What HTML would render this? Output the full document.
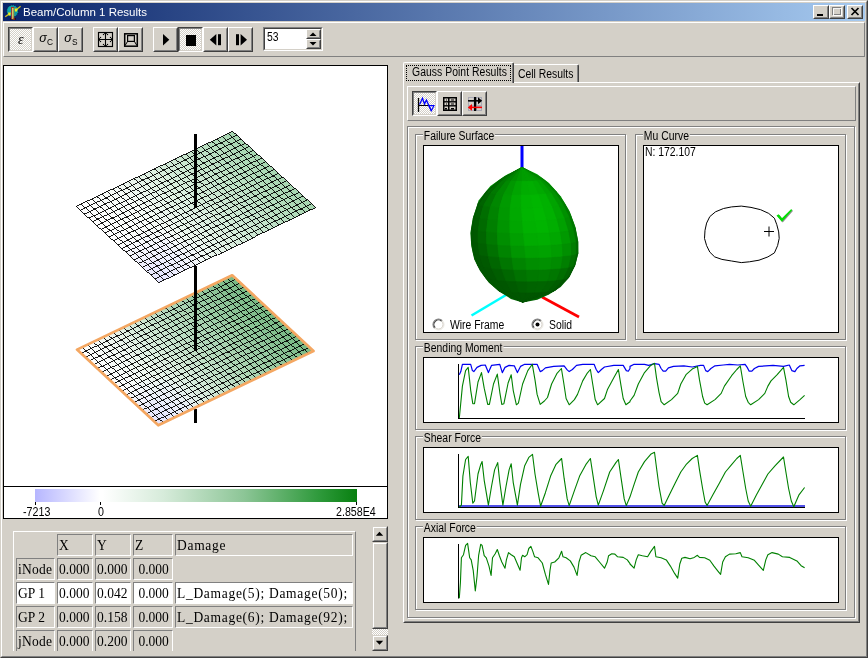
<!DOCTYPE html><html><head><meta charset="utf-8"><title>Beam/Column 1 Results</title><style>
html,body{margin:0;padding:0;}
body{width:868px;height:658px;background:#D4D0C8;overflow:hidden;position:relative;will-change:transform;
 font-family:"Liberation Sans",sans-serif;font-size:11px;color:#000;}
div{position:absolute;box-sizing:border-box;}
svg{position:absolute;left:0;top:0;overflow:visible;}
.t{white-space:nowrap;line-height:1;}
.raised{border:1px solid;border-color:#fff #808080 #808080 #fff;}
.btn{border:1px solid;border-color:#fff #404040 #404040 #fff;background:#D4D0C8;}
.btn:after{content:"";position:absolute;left:0;top:0;right:0;bottom:0;border:1px solid;border-color:#D4D0C8 #808080 #808080 #D4D0C8;}
.sbtn{border:1px solid;border-color:#D4D0C8 #404040 #404040 #D4D0C8;background:#D4D0C8;}
.sbtn:after{content:"";position:absolute;left:0;top:0;right:0;bottom:0;border:1px solid;border-color:#fff #808080 #808080 #fff;}
.btnp{border:1px solid;border-color:#404040 #fff #fff #404040;background-color:#D4D0C8;
 background-image:linear-gradient(45deg,#fff 25%,transparent 25%,transparent 75%,#fff 75%),linear-gradient(45deg,#fff 25%,transparent 25%,transparent 75%,#fff 75%);
 background-size:2px 2px;background-position:0 0,1px 1px;}
.btnp:after{content:"";position:absolute;left:0;top:0;right:0;bottom:0;border:1px solid;border-color:#808080 #D4D0C8 #D4D0C8 #808080;}
.etch{border:1px solid #808080;box-shadow:1px 1px 0 #fff, inset 1px 1px 0 #fff;}
.view{background:#fff;border:1px solid #000;overflow:hidden;}
.gl{background:#D4D0C8;padding:0 1px;white-space:nowrap;line-height:13px;height:13px;}
.cell{border:1px solid;border-color:#808080 #fff #fff #808080;font-family:"Liberation Serif",serif;font-size:15px;white-space:nowrap;line-height:21px;padding-left:1px;overflow:hidden;}
.w{background:#fff;}
.cs{display:inline-block;transform:scaleX(0.9);transform-origin:0 0;}
.ux{transform:scaleX(0.866);transform-origin:0 0;}
.sx{transform:scaleX(0.89);transform-origin:0 0;}
</style></head><body>
<div style="left:0px;top:0px;width:868px;height:658px;border:1px solid;border-color:#D4D0C8 #404040 #404040 #D4D0C8;"></div>
<div style="left:1px;top:1px;width:866px;height:656px;border:1px solid;border-color:#fff #808080 #808080 #fff;"></div>
<div style="left:3px;top:3px;width:862px;height:18px;background:linear-gradient(90deg,#0A246A 0%,#A6CAF0 100%);"></div>
<svg width="868" height="658" viewBox="0 0 868 658" style="pointer-events:none">
<g id="ticon">
<circle cx="12.5" cy="11" r="5.9" fill="#0c98a0" stroke="#081040" stroke-width="0.9" stroke-dasharray="1 1.2"/>
<circle cx="11" cy="9.5" r="3" fill="#18b0b0" opacity="0.7"/>
<path d="M5.2 16.8 L9.8 13.6" stroke="#d0c020" stroke-width="1.3" fill="none"/>
<path d="M8 12.6 L10.8 12.4 L10.4 15.2 L8.8 15.6 Z" fill="#f4f41c"/>
<rect x="10.2" y="18.3" width="5.8" height="1.3" fill="#180808"/>
<rect x="11" y="7.4" width="1.3" height="11.8" fill="#963838"/>
<rect x="12.2" y="7.4" width="1.1" height="11.8" fill="#ecdc70"/>
<rect x="13.2" y="7.4" width="1" height="11.8" fill="#b89838"/>
<rect x="11" y="7" width="3.2" height="0.9" fill="#b02818"/>
<rect x="13" y="18.6" width="2.2" height="1" fill="#b02010"/>
<path d="M20.6 6.2 L16 10" stroke="#d0c020" stroke-width="1.3" fill="none"/>
<path d="M14.8 8.6 L17.6 8.8 L17 11.4 L15 11.4 Z" fill="#f4f41c"/>
</g>
</svg>
<div class="t" style="left:23px;top:5px;width:300px;height:14px;color:#fff;font-size:11.5px;line-height:14px;">Beam/Column 1 Results</div>
<div class="btn" style="left:813px;top:5px;width:16px;height:14px;"><svg width="14" height="12"><rect x="3" y="8" width="6" height="2" fill="#000"/></svg></div>
<div class="btn" style="left:829px;top:5px;width:16px;height:14px;"><svg width="14" height="12"><rect x="2.5" y="1.5" width="8" height="7" fill="none" stroke="#808080"/><rect x="2" y="1" width="9" height="2" fill="#808080"/><rect x="3.5" y="2.5" width="8" height="7" fill="none" stroke="#fff" opacity="0.9"/></svg></div>
<div class="btn" style="left:847px;top:5px;width:16px;height:14px;"><svg width="14" height="12"><path d="M3.5 2 L10.5 9 M10.5 2 L3.5 9" stroke="#000" stroke-width="1.7" fill="none"/></svg></div>
<div class="raised" style="left:3px;top:22px;width:862px;height:35px;"></div>
<div class="btnp" style="left:8px;top:27px;width:25px;height:25px;"><div class="t" style="left:9px;top:5px;font-style:italic;font-size:14px;font-family:'Liberation Serif',serif;">&epsilon;</div></div>
<div class="btn" style="left:33px;top:27px;width:25px;height:25px;"><div class="t" style="left:5.3px;top:4.3px;font-size:12.5px;font-style:italic;">&sigma;</div><div class="t ux" style="left:12.8px;top:9.4px;font-size:9.6px;">C</div></div>
<div class="btn" style="left:58px;top:27px;width:25px;height:25px;"><div class="t" style="left:5.3px;top:4.3px;font-size:12.5px;font-style:italic;">&sigma;</div><div class="t ux" style="left:12.8px;top:9.4px;font-size:9.6px;">S</div></div>
<div class="btn" style="left:93px;top:27px;width:25px;height:25px;"><svg width="23" height="23" viewBox="0 0 23 23">
<rect x="4.5" y="4.5" width="14" height="14" fill="none" stroke="#000" stroke-width="1.15"/>
<path d="M11.5 5 V18 M5 11.5 H18" stroke="#000" stroke-width="1.1"/>
<g fill="#000"><rect x="10" y="5" width="3" height="0.8"/><rect x="10" y="17.2" width="3" height="0.8"/><rect x="5" y="10" width="0.8" height="3"/><rect x="17.2" y="10" width="0.8" height="3"/>
<rect x="8.9" y="5.9" width="1.2" height="1.2"/><rect x="12.9" y="5.9" width="1.2" height="1.2"/><rect x="5.9" y="8.9" width="1.2" height="1.2"/><rect x="15.9" y="8.9" width="1.2" height="1.2"/>
<rect x="5.9" y="12.9" width="1.2" height="1.2"/><rect x="15.9" y="12.9" width="1.2" height="1.2"/><rect x="8.9" y="15.9" width="1.2" height="1.2"/><rect x="12.9" y="15.9" width="1.2" height="1.2"/></g>
</svg></div>
<div class="btn" style="left:118px;top:27px;width:25px;height:25px;"><svg width="23" height="23" viewBox="0 0 23 23">
<rect x="5.7" y="5.8" width="12.6" height="12.4" fill="none" stroke="#000" stroke-width="1.5"/>
<rect x="8.6" y="7.6" width="6.8" height="5.8" fill="none" stroke="#000" stroke-width="1.2"/>
<path d="M8.6 13.4 L6.2 17.3 M15.4 13.4 L17.8 17.3" stroke="#000" stroke-width="1"/>
</svg></div>
<div class="btn" style="left:153px;top:27px;width:25px;height:25px;"><svg width="23" height="23"><path d="M9 6 L9 17.4 L15.3 11.7 Z" fill="#000"/></svg></div>
<div class="btnp" style="left:178px;top:27px;width:25px;height:25px;"><svg width="23" height="23"><rect x="7" y="7" width="10" height="11" fill="#000"/></svg></div>
<div class="btn" style="left:203px;top:27px;width:25px;height:25px;"><svg width="23" height="23"><path d="M12.3 6 L12.3 17.4 L5.8 11.7 Z" fill="#000"/><rect x="14" y="6.2" width="3" height="11" fill="#000"/></svg></div>
<div class="btn" style="left:228px;top:27px;width:25px;height:25px;"><svg width="23" height="23"><rect x="7" y="6.2" width="3" height="11" fill="#000"/><path d="M11.6 6 L11.6 17.4 L18 11.7 Z" fill="#000"/></svg></div>
<div style="left:263px;top:27px;width:60px;height:24px;background:#fff;border:1px solid;border-color:#808080 #fff #fff #808080;"></div>
<div style="left:264px;top:28px;width:58px;height:22px;border:1px solid;border-color:#404040 #D4D0C8 #D4D0C8 #404040;"></div>
<div class="t ux" style="left:267px;top:31px;width:30px;height:12px;font-size:12px;">53</div>
<div class="btn" style="left:306px;top:29px;width:15px;height:10px;"><svg width="13" height="8"><path d="M2.5 6 L9.5 6 L6 2.5 Z" fill="#000"/></svg></div>
<div class="btn" style="left:306px;top:39px;width:15px;height:10px;"><svg width="13" height="8"><path d="M2.5 2 L9.5 2 L6 5.5 Z" fill="#000"/></svg></div>
<div class="view" style="left:3px;top:65px;width:385px;height:454px;"></div>
<svg width="868" height="658" viewBox="0 0 868 658">
<rect x="194" y="409" width="3" height="14" fill="#000"/>
<defs><linearGradient id="g2" gradientUnits="userSpaceOnUse" x1="117.7" y1="387.5" x2="226.8" y2="270.3">
<stop offset="0" stop-color="#ffffff"/>
<stop offset="0.2" stop-color="#eef7f0"/>
<stop offset="0.55" stop-color="#b6dabd"/>
<stop offset="1" stop-color="#76b883"/>
</linearGradient>
<radialGradient id="g2r" gradientUnits="userSpaceOnUse" cx="158.3" cy="425.3" r="50"><stop offset="0" stop-color="#e2e2ff"/><stop offset="1" stop-color="#e2e2ff" stop-opacity="0"/></radialGradient>
<clipPath id="g2c"><polygon points="77.0,349.6 232.2,275.3 313.5,351.0 158.3,425.3"/></clipPath></defs>
<polygon points="77.0,349.6 232.2,275.3 313.5,351.0 158.3,425.3" fill="url(#g2)"/>
<polygon points="77.0,349.6 232.2,275.3 313.5,351.0 158.3,425.3" fill="url(#g2r)"/>
<path d="M77.0 349.6L158.3 425.3M82.2 347.1L163.5 422.8M87.3 344.6L168.6 420.3M92.5 342.2L173.8 417.9M97.7 339.7L179.0 415.4M102.9 337.2L184.2 412.9M108.0 334.7L189.3 410.4M113.2 332.3L194.5 408.0M118.4 329.8L199.7 405.5M123.6 327.3L204.9 403.0M128.7 324.8L210.0 400.5M133.9 322.4L215.2 398.1M139.1 319.9L220.4 395.6M144.3 317.4L225.6 393.1M149.4 314.9L230.7 390.6M154.6 312.5L235.9 388.2M159.8 310.0L241.1 385.7M164.9 307.5L246.2 383.2M170.1 305.0L251.4 380.7M175.3 302.5L256.6 378.2M180.5 300.1L261.8 375.8M185.6 297.6L266.9 373.3M190.8 295.1L272.1 370.8M196.0 292.6L277.3 368.3M201.2 290.2L282.5 365.9M206.3 287.7L287.6 363.4M211.5 285.2L292.8 360.9M216.7 282.7L298.0 358.4M221.9 280.3L303.2 356.0M227.0 277.8L308.3 353.5M232.2 275.3L313.5 351.0M77.0 349.6L232.2 275.3M81.1 353.4L236.3 279.1M85.1 357.2L240.3 282.9M89.2 361.0L244.4 286.7M93.3 364.7L248.5 290.4M97.3 368.5L252.5 294.2M101.4 372.3L256.6 298.0M105.5 376.1L260.7 301.8M109.5 379.9L264.7 305.6M113.6 383.7L268.8 309.4M117.7 387.5L272.9 313.2M121.7 391.2L276.9 316.9M125.8 395.0L281.0 320.7M129.8 398.8L285.0 324.5M133.9 402.6L289.1 328.3M138.0 406.4L293.2 332.1M142.0 410.2L297.2 335.9M146.1 413.9L301.3 339.6M150.2 417.7L305.4 343.4M154.2 421.5L309.4 347.2M158.3 425.3L313.5 351.0" stroke="#000" stroke-width="0.9" fill="none" shape-rendering="crispEdges"/>
<polygon points="77.0,349.6 232.2,275.3 313.5,351.0 158.3,425.3" fill="none" stroke="#F4A762" stroke-width="2.7" stroke-linejoin="round"/>
<rect x="194" y="266" width="3" height="85" fill="#000"/>
<defs><linearGradient id="g1" gradientUnits="userSpaceOnUse" x1="117.5" y1="244.6" x2="226.5" y2="125.7">
<stop offset="0" stop-color="#ffffff"/>
<stop offset="0.25" stop-color="#f6fbf7"/>
<stop offset="0.6" stop-color="#cfe9d5"/>
<stop offset="1" stop-color="#a6d6b0"/>
</linearGradient>
<radialGradient id="g1r" gradientUnits="userSpaceOnUse" cx="159.0" cy="282.6" r="55"><stop offset="0" stop-color="#e4e4ff"/><stop offset="1" stop-color="#e4e4ff" stop-opacity="0"/></radialGradient>
<clipPath id="g1c"><polygon points="76.0,206.5 232.7,131.4 315.7,207.5 159.0,282.6"/></clipPath></defs>
<polygon points="76.0,206.5 232.7,131.4 315.7,207.5 159.0,282.6" fill="url(#g1)"/>
<polygon points="76.0,206.5 232.7,131.4 315.7,207.5 159.0,282.6" fill="url(#g1r)"/>
<path d="M76.0 206.5L159.0 282.6M81.2 204.0L164.2 280.1M86.4 201.5L169.4 277.6M91.7 199.0L174.7 275.1M96.9 196.5L179.9 272.6M102.1 194.0L185.1 270.1M107.3 191.5L190.3 267.6M112.6 189.0L195.6 265.1M117.8 186.5L200.8 262.6M123.0 184.0L206.0 260.1M128.2 181.5L211.2 257.6M133.5 179.0L216.5 255.1M138.7 176.5L221.7 252.6M143.9 174.0L226.9 250.1M149.1 171.5L232.1 247.6M154.3 168.9L237.3 245.1M159.6 166.4L242.6 242.5M164.8 163.9L247.8 240.0M170.0 161.4L253.0 237.5M175.2 158.9L258.2 235.0M180.5 156.4L263.5 232.5M185.7 153.9L268.7 230.0M190.9 151.4L273.9 227.5M196.1 148.9L279.1 225.0M201.4 146.4L284.4 222.5M206.6 143.9L289.6 220.0M211.8 141.4L294.8 217.5M217.0 138.9L300.0 215.0M222.3 136.4L305.3 212.5M227.5 133.9L310.5 210.0M232.7 131.4L315.7 207.5M76.0 206.5L232.7 131.4M80.2 210.3L236.8 135.2M84.3 214.1L241.0 139.0M88.5 217.9L245.1 142.8M92.6 221.7L249.3 146.6M96.8 225.5L253.4 150.4M100.9 229.3L257.6 154.2M105.1 233.1L261.8 158.0M109.2 236.9L265.9 161.8M113.3 240.7L270.0 165.6M117.5 244.6L274.2 169.5M121.7 248.4L278.4 173.3M125.8 252.2L282.5 177.1M129.9 256.0L286.6 180.9M134.1 259.8L290.8 184.7M138.2 263.6L294.9 188.5M142.4 267.4L299.1 192.3M146.6 271.2L303.2 196.1M150.7 275.0L307.4 199.9M154.9 278.8L311.6 203.7M159.0 282.6L315.7 207.5" stroke="#000" stroke-width="0.9" fill="none" shape-rendering="crispEdges"/>
<rect x="194" y="134" width="3" height="74" fill="#000"/>
</svg>
<div style="left:4px;top:486px;width:383px;height:1px;background:#000;"></div>
<div style="left:35px;top:489px;width:322px;height:13px;background:linear-gradient(90deg,#b6b6ff 0%,#ffffff 20.2%,#ffffff 21%,#d6ebda 40%,#8cc596 65%,#2f9a3c 88%,#088010 100%);"></div>
<div style="left:35px;top:502px;width:1px;height:3px;background:#000;"></div>
<div style="left:100px;top:502px;width:1px;height:3px;background:#000;"></div>
<div style="left:356px;top:502px;width:1px;height:3px;background:#000;"></div>
<div class="t sx" style="left:23px;top:506px;font-size:12px;">-7213</div>
<div class="t sx" style="left:98px;top:506px;font-size:12px;">0</div>
<div class="t sx" style="left:336px;top:506px;font-size:12px;">2.858E4</div>
<div style="left:13px;top:531px;width:343px;height:120px;border:1px solid;border-color:#fff #808080 #808080 #fff;border-bottom:none;"></div>
<div style="left:13px;top:531px;width:345px;height:120px;overflow:hidden;">
<div class="cell" style="left:44px;top:3px;width:36px;height:22px;"><span class="cs" style="">X</span></div>
<div class="cell" style="left:82px;top:3px;width:36px;height:22px;"><span class="cs" style="">Y</span></div>
<div class="cell" style="left:120px;top:3px;width:40px;height:22px;"><span class="cs" style="">Z</span></div>
<div class="cell" style="left:162px;top:3px;width:178px;height:22px;"><span class="cs" style="letter-spacing:0.78px;">Damage</span></div>
<div class="cell" style="left:3px;top:27px;width:39px;height:22px;"><span class="cs" style="letter-spacing:0.3px;">iNode</span></div>
<div class="cell" style="left:44px;top:27px;width:36px;height:22px;"><span class="cs" style="">0.000</span></div>
<div class="cell" style="left:82px;top:27px;width:36px;height:22px;"><span class="cs" style="">0.000</span></div>
<div class="cell" style="left:120px;top:27px;width:40px;height:22px;text-align:right;padding-right:3px;"><span class="cs" style="transform-origin:100% 0;">0.000</span></div>
<div class="cell w" style="left:3px;top:51px;width:39px;height:22px;"><span class="cs" style="">GP 1</span></div>
<div class="cell w" style="left:44px;top:51px;width:36px;height:22px;"><span class="cs" style="">0.000</span></div>
<div class="cell w" style="left:82px;top:51px;width:36px;height:22px;"><span class="cs" style="">0.042</span></div>
<div class="cell w" style="left:120px;top:51px;width:40px;height:22px;text-align:right;padding-right:3px;"><span class="cs" style="transform-origin:100% 0;">0.000</span></div>
<div class="cell w" style="left:162px;top:51px;width:178px;height:22px;"><span class="cs" style="letter-spacing:0.78px;">L_Damage(5); Damage(50);</span></div>
<div class="cell" style="left:3px;top:75px;width:39px;height:22px;"><span class="cs" style="">GP 2</span></div>
<div class="cell" style="left:44px;top:75px;width:36px;height:22px;"><span class="cs" style="">0.000</span></div>
<div class="cell" style="left:82px;top:75px;width:36px;height:22px;"><span class="cs" style="">0.158</span></div>
<div class="cell" style="left:120px;top:75px;width:40px;height:22px;text-align:right;padding-right:3px;"><span class="cs" style="transform-origin:100% 0;">0.000</span></div>
<div class="cell" style="left:162px;top:75px;width:178px;height:22px;"><span class="cs" style="letter-spacing:0.78px;">L_Damage(6); Damage(92);</span></div>
<div class="cell" style="left:3px;top:99px;width:39px;height:22px;"><span class="cs" style="letter-spacing:0.3px;">jNode</span></div>
<div class="cell" style="left:44px;top:99px;width:36px;height:22px;"><span class="cs" style="">0.000</span></div>
<div class="cell" style="left:82px;top:99px;width:36px;height:22px;"><span class="cs" style="">0.200</span></div>
<div class="cell" style="left:120px;top:99px;width:40px;height:22px;text-align:right;padding-right:3px;"><span class="cs" style="transform-origin:100% 0;">0.000</span></div>
</div>
<div style="left:372px;top:526px;width:16px;height:125px;background-color:#D4D0C8;background-image:linear-gradient(45deg,#fff 25%,transparent 25%,transparent 75%,#fff 75%),linear-gradient(45deg,#fff 25%,transparent 25%,transparent 75%,#fff 75%);background-size:2px 2px;background-position:0 0,1px 1px;"></div>
<div class="sbtn" style="left:372px;top:526px;width:16px;height:16px;"><svg width="14" height="14"><path d="M2.8 8.7 L10.2 8.7 L6.5 4.7 Z" fill="#000"/></svg></div>
<div class="sbtn" style="left:372px;top:542px;width:16px;height:87px;"></div>
<div class="sbtn" style="left:372px;top:635px;width:16px;height:16px;"><svg width="14" height="14"><path d="M2.8 4.8 L10.2 4.8 L6.5 8.8 Z" fill="#000"/></svg></div>
<div style="left:403px;top:82px;width:457px;height:541px;border:1px solid;border-color:#fff #404040 #404040 #fff;"></div>
<div style="left:404px;top:83px;width:455px;height:539px;border:1px solid;border-color:#D4D0C8 #808080 #808080 #D4D0C8;"></div>
<div style="left:514px;top:64px;width:65px;height:18px;border:1px solid;border-color:#fff #404040 transparent #D4D0C8;border-bottom:none;border-left:none;border-radius:0 2px 0 0;"></div>
<div style="left:515px;top:65px;width:63px;height:17px;border-right:1px solid #808080;"></div>
<div class="t ux" style="left:518px;top:68px;font-size:12px;">Cell Results</div>
<div style="left:403px;top:62px;width:111px;height:21px;background:#D4D0C8;border:1px solid;border-color:#fff #404040 #D4D0C8 #fff;border-bottom:none;border-radius:2px 2px 0 0;"></div>
<div style="left:404px;top:63px;width:109px;height:20px;border-right:1px solid #808080;"></div>
<div style="left:406px;top:65px;width:105px;height:16px;border:1px dotted #000;"></div>
<div class="t ux" style="left:411.6px;top:66px;font-size:12px;letter-spacing:0.05px;">Gauss Point Results</div>
<div class="raised" style="left:407px;top:86px;width:449px;height:35px;"></div>
<div class="btnp" style="left:412px;top:91px;width:25px;height:25px;"><svg width="23" height="23" viewBox="0 0 23 23">
<path d="M5.5 6 V20" stroke="#000" stroke-width="1.3"/><path d="M5.5 13.5 H20.5" stroke="#000" stroke-width="1"/>
<path d="M6.6 12.5 L9.5 6.2 L11.5 12 L13.4 8.1 L18.2 18.7" stroke="#0000FF" stroke-width="1.3" fill="none"/>
<path d="M15.8 13.6 L21 13.6 L18.4 18.7 Z" stroke="#0000FF" stroke-width="1.1" fill="none"/></svg></div>
<div class="btn" style="left:437px;top:91px;width:25px;height:25px;"><svg width="23" height="23" viewBox="0 0 23 23">
<rect x="5" y="5" width="14" height="14" fill="#000"/>
<g fill="#D4D0C8"><rect x="6.5" y="6.5" width="3.5" height="2.6"/><rect x="11.5" y="6.5" width="6" height="2.6"/>
<rect x="6.5" y="10.5" width="3.5" height="2.6"/><rect x="11.5" y="10.5" width="6" height="2.6"/>
<rect x="6.5" y="14.5" width="3.5" height="3"/><rect x="11.5" y="14.5" width="6" height="3"/></g>
<g fill="#000"><rect x="8" y="7.5" width="1" height="1"/><rect x="13" y="7.5" width="3" height="1"/><rect x="8" y="11.5" width="1" height="1"/><rect x="13" y="11.5" width="3" height="1"/><rect x="7" y="16" width="2" height="1.5"/><rect x="13" y="16" width="3" height="1.5"/></g></svg></div>
<div class="btn" style="left:462px;top:91px;width:25px;height:25px;"><svg width="23" height="23" viewBox="0 0 23 23">
<rect x="5" y="5" width="14" height="14" fill="#a8a8b4"/>
<g fill="#D4D0C8"><rect x="6" y="6" width="4.5" height="2.5"/><rect x="14" y="6" width="4" height="2.5"/><rect x="6" y="10" width="4.5" height="3"/><rect x="14" y="10" width="4" height="3"/><rect x="6" y="15.5" width="4.5" height="2.5"/><rect x="14" y="15.5" width="4" height="2.5"/></g>
<rect x="11" y="5" width="2.2" height="14" fill="#000"/>
<path d="M5 8.8 H16" stroke="#000" stroke-width="1.5"/><path d="M15 5.3 L19.2 8.8 L15 12.3 Z" fill="#000"/>
<path d="M8 15.4 H19" stroke="#FF0000" stroke-width="1.5"/><path d="M9 12 L4.8 15.4 L9 18.8 Z" fill="#FF0000"/></svg></div>
<div class="etch" style="left:407px;top:126px;width:448px;height:492px;"></div>
<div class="etch" style="left:415px;top:134px;width:211px;height:206px;"></div><div class="gl ux" style="left:423px;top:130px;font-size:12px;">Failure Surface</div>
<div class="etch" style="left:635px;top:134px;width:211px;height:206px;"></div><div class="gl ux" style="left:643px;top:130px;font-size:12px;">Mu Curve</div>
<div class="etch" style="left:415px;top:346px;width:431px;height:84px;"></div><div class="gl ux" style="left:423px;top:342px;font-size:12px;">Bending Moment</div>
<div class="etch" style="left:415px;top:436px;width:431px;height:84px;"></div><div class="gl ux" style="left:423px;top:432px;font-size:12px;">Shear Force</div>
<div class="etch" style="left:415px;top:526px;width:431px;height:84px;"></div><div class="gl ux" style="left:423px;top:522px;font-size:12px;">Axial Force</div>
<div class="view" style="left:423px;top:145px;width:196px;height:188px;"></div>
<div class="view" style="left:643px;top:145px;width:196px;height:188px;"></div>
<div class="view" style="left:423px;top:357px;width:416px;height:66px;"></div>
<div class="view" style="left:423px;top:447px;width:416px;height:66px;"></div>
<div class="view" style="left:423px;top:537px;width:416px;height:66px;"></div>
<svg width="868" height="658" viewBox="0 0 868 658">
<defs><radialGradient id="fs" gradientUnits="userSpaceOnUse" cx="527" cy="190" r="95" fx="527" fy="185"><stop offset="0" stop-color="#00B400"/><stop offset="0.35" stop-color="#00A000"/><stop offset="0.7" stop-color="#008400"/><stop offset="1" stop-color="#006200"/></radialGradient>
<linearGradient id="fsl" gradientUnits="userSpaceOnUse" x1="470" y1="0" x2="579" y2="0"><stop offset="0" stop-color="#003800" stop-opacity="0.55"/><stop offset="0.22" stop-color="#004800" stop-opacity="0.15"/><stop offset="0.5" stop-color="#00c000" stop-opacity="0"/><stop offset="0.8" stop-color="#004800" stop-opacity="0.1"/><stop offset="1" stop-color="#003800" stop-opacity="0.45"/></linearGradient></defs>
<rect x="520.5" y="146" width="3" height="22" fill="#0000FF"/>
<path d="M506 295 L471.5 315.5" stroke="#00FFFF" stroke-width="2.6"/>
<path d="M542 297 L579 317" stroke="#FF0000" stroke-width="2.6"/>
<path d="M522.0 166.9 L537.3 174.2 L549.0 183.0 L560.7 196.2 L569.5 210.9 L575.4 227.0 L578.3 241.7 L578.3 253.4 L575.4 265.1 L569.5 276.9 L560.7 287.1 L549.0 294.5 L537.3 299.7 L522.6 302.4 L510.9 298.9 L499.2 291.5 L488.9 282.7 L480.1 271.0 L474.2 259.3 L471.3 246.1 L470.4 232.9 L472.8 218.2 L478.6 200.6 L490.4 186.0 L505.0 175.7Z" fill="url(#fs)"/>
<clipPath id="fsc"><path d="M522.0 166.9 L537.3 174.2 L549.0 183.0 L560.7 196.2 L569.5 210.9 L575.4 227.0 L578.3 241.7 L578.3 253.4 L575.4 265.1 L569.5 276.9 L560.7 287.1 L549.0 294.5 L537.3 299.7 L522.6 302.4 L510.9 298.9 L499.2 291.5 L488.9 282.7 L480.1 271.0 L474.2 259.3 L471.3 246.1 L470.4 232.9 L472.8 218.2 L478.6 200.6 L490.4 186.0 L505.0 175.7Z"/></clipPath>
<g clip-path="url(#fsc)"><polygon points="522.0,166.9 522.0,166.9 500.7,179.8 500.0,179.2" fill="#006400" stroke="#006400" stroke-width="0.6"/><polygon points="522.0,166.9 522.0,166.9 502.9,180.3 500.7,179.8" fill="#006d00" stroke="#006d00" stroke-width="0.6"/><polygon points="522.0,166.9 522.0,166.9 506.4,180.8 502.9,180.3" fill="#007900" stroke="#007900" stroke-width="0.6"/><polygon points="522.0,166.9 522.0,166.9 511.0,181.1 506.4,180.8" fill="#008400" stroke="#008400" stroke-width="0.6"/><polygon points="522.0,166.9 522.0,166.9 516.3,181.4 511.0,181.1" fill="#008f00" stroke="#008f00" stroke-width="0.6"/><polygon points="522.0,166.9 522.0,166.9 522.0,181.4 516.3,181.4" fill="#009800" stroke="#009800" stroke-width="0.6"/><polygon points="522.0,166.9 522.0,166.9 527.6,181.4 522.0,181.4" fill="#009d00" stroke="#009d00" stroke-width="0.6"/><polygon points="522.0,166.9 522.0,166.9 532.9,181.1 527.6,181.4" fill="#009e00" stroke="#009e00" stroke-width="0.6"/><polygon points="522.0,166.9 522.0,166.9 537.5,180.8 532.9,181.1" fill="#009b00" stroke="#009b00" stroke-width="0.6"/><polygon points="522.0,166.9 522.0,166.9 541.0,180.3 537.5,180.8" fill="#009500" stroke="#009500" stroke-width="0.6"/><polygon points="522.0,166.9 522.0,166.9 543.2,179.8 541.0,180.3" fill="#008b00" stroke="#008b00" stroke-width="0.6"/><polygon points="522.0,166.9 522.0,166.9 543.9,179.2 543.2,179.8" fill="#008000" stroke="#008000" stroke-width="0.6"/><polygon points="500.0,179.2 500.7,179.8 487.1,192.5 485.9,191.5" fill="#005d00" stroke="#005d00" stroke-width="0.6"/><polygon points="500.7,179.8 502.9,180.3 490.6,193.3 487.1,192.5" fill="#006900" stroke="#006900" stroke-width="0.6"/><polygon points="502.9,180.3 506.4,180.8 496.3,194.0 490.6,193.3" fill="#007800" stroke="#007800" stroke-width="0.6"/><polygon points="506.4,180.8 511.0,181.1 503.6,194.6 496.3,194.0" fill="#008800" stroke="#008800" stroke-width="0.6"/><polygon points="511.0,181.1 516.3,181.4 512.1,195.0 503.6,194.6" fill="#009700" stroke="#009700" stroke-width="0.6"/><polygon points="516.3,181.4 522.0,181.4 521.2,195.1 512.1,195.0" fill="#00a400" stroke="#00a400" stroke-width="0.6"/><polygon points="522.0,181.4 527.6,181.4 530.4,195.0 521.2,195.1" fill="#00ac00" stroke="#00ac00" stroke-width="0.6"/><polygon points="527.6,181.4 532.9,181.1 538.9,194.6 530.4,195.0" fill="#00ae00" stroke="#00ae00" stroke-width="0.6"/><polygon points="532.9,181.1 537.5,180.8 546.2,194.0 538.9,194.6" fill="#00a900" stroke="#00a900" stroke-width="0.6"/><polygon points="537.5,180.8 541.0,180.3 551.8,193.3 546.2,194.0" fill="#00a000" stroke="#00a000" stroke-width="0.6"/><polygon points="541.0,180.3 543.2,179.8 555.4,192.5 551.8,193.3" fill="#009200" stroke="#009200" stroke-width="0.6"/><polygon points="543.2,179.8 543.9,179.2 556.6,191.5 555.4,192.5" fill="#008200" stroke="#008200" stroke-width="0.6"/><polygon points="485.9,191.5 487.1,192.5 479.1,205.0 477.6,203.9" fill="#005800" stroke="#005800" stroke-width="0.6"/><polygon points="487.1,192.5 490.6,193.3 483.4,206.1 479.1,205.0" fill="#006300" stroke="#006300" stroke-width="0.6"/><polygon points="490.6,193.3 496.3,194.0 490.4,207.0 483.4,206.1" fill="#007400" stroke="#007400" stroke-width="0.6"/><polygon points="496.3,194.0 503.6,194.6 499.5,207.7 490.4,207.0" fill="#008700" stroke="#008700" stroke-width="0.6"/><polygon points="503.6,194.6 512.1,195.0 510.1,208.1 499.5,207.7" fill="#009a00" stroke="#009a00" stroke-width="0.6"/><polygon points="512.1,195.0 521.2,195.1 521.4,208.2 510.1,208.1" fill="#00aa00" stroke="#00aa00" stroke-width="0.6"/><polygon points="521.2,195.1 530.4,195.0 532.8,208.1 521.4,208.2" fill="#00b300" stroke="#00b300" stroke-width="0.6"/><polygon points="530.4,195.0 538.9,194.6 543.4,207.7 532.8,208.1" fill="#00b600" stroke="#00b600" stroke-width="0.6"/><polygon points="538.9,194.6 546.2,194.0 552.5,207.0 543.4,207.7" fill="#00b100" stroke="#00b100" stroke-width="0.6"/><polygon points="546.2,194.0 551.8,193.3 559.4,206.1 552.5,207.0" fill="#00a400" stroke="#00a400" stroke-width="0.6"/><polygon points="551.8,193.3 555.4,192.5 563.8,205.0 559.4,206.1" fill="#009300" stroke="#009300" stroke-width="0.6"/><polygon points="555.4,192.5 556.6,191.5 565.3,203.9 563.8,205.0" fill="#008000" stroke="#008000" stroke-width="0.6"/><polygon points="477.6,203.9 479.1,205.0 475.1,217.4 473.5,216.2" fill="#005600" stroke="#005600" stroke-width="0.6"/><polygon points="479.1,205.0 483.4,206.1 480.0,218.6 475.1,217.4" fill="#005e00" stroke="#005e00" stroke-width="0.6"/><polygon points="483.4,206.1 490.4,207.0 487.8,219.6 480.0,218.6" fill="#006e00" stroke="#006e00" stroke-width="0.6"/><polygon points="490.4,207.0 499.5,207.7 498.0,220.4 487.8,219.6" fill="#008300" stroke="#008300" stroke-width="0.6"/><polygon points="499.5,207.7 510.1,208.1 509.8,220.9 498.0,220.4" fill="#009800" stroke="#009800" stroke-width="0.6"/><polygon points="510.1,208.1 521.4,208.2 522.4,221.1 509.8,220.9" fill="#00a900" stroke="#00a900" stroke-width="0.6"/><polygon points="521.4,208.2 532.8,208.1 535.1,220.9 522.4,221.1" fill="#00b400" stroke="#00b400" stroke-width="0.6"/><polygon points="532.8,208.1 543.4,207.7 546.9,220.4 535.1,220.9" fill="#00b700" stroke="#00b700" stroke-width="0.6"/><polygon points="543.4,207.7 552.5,207.0 557.1,219.6 546.9,220.4" fill="#00b100" stroke="#00b100" stroke-width="0.6"/><polygon points="552.5,207.0 559.4,206.1 564.9,218.6 557.1,219.6" fill="#00a300" stroke="#00a300" stroke-width="0.6"/><polygon points="559.4,206.1 563.8,205.0 569.8,217.4 564.9,218.6" fill="#009000" stroke="#009000" stroke-width="0.6"/><polygon points="563.8,205.0 565.3,203.9 571.4,216.2 569.8,217.4" fill="#007b00" stroke="#007b00" stroke-width="0.6"/><polygon points="473.5,216.2 475.1,217.4 472.9,229.8 471.1,228.5" fill="#005600" stroke="#005600" stroke-width="0.6"/><polygon points="475.1,217.4 480.0,218.6 478.1,231.1 472.9,229.8" fill="#005b00" stroke="#005b00" stroke-width="0.6"/><polygon points="480.0,218.6 487.8,219.6 486.4,232.2 478.1,231.1" fill="#006a00" stroke="#006a00" stroke-width="0.6"/><polygon points="487.8,219.6 498.0,220.4 497.3,233.0 486.4,232.2" fill="#007f00" stroke="#007f00" stroke-width="0.6"/><polygon points="498.0,220.4 509.8,220.9 509.9,233.5 497.3,233.0" fill="#009400" stroke="#009400" stroke-width="0.6"/><polygon points="509.8,220.9 522.4,221.1 523.4,233.7 509.9,233.5" fill="#00a600" stroke="#00a600" stroke-width="0.6"/><polygon points="522.4,221.1 535.1,220.9 536.9,233.5 523.4,233.7" fill="#00b100" stroke="#00b100" stroke-width="0.6"/><polygon points="535.1,220.9 546.9,220.4 549.5,233.0 536.9,233.5" fill="#00b400" stroke="#00b400" stroke-width="0.6"/><polygon points="546.9,220.4 557.1,219.6 560.4,232.2 549.5,233.0" fill="#00ae00" stroke="#00ae00" stroke-width="0.6"/><polygon points="557.1,219.6 564.9,218.6 568.7,231.1 560.4,232.2" fill="#00a000" stroke="#00a000" stroke-width="0.6"/><polygon points="564.9,218.6 569.8,217.4 573.9,229.8 568.7,231.1" fill="#008c00" stroke="#008c00" stroke-width="0.6"/><polygon points="569.8,217.4 571.4,216.2 575.7,228.5 573.9,229.8" fill="#007700" stroke="#007700" stroke-width="0.6"/><polygon points="471.1,228.5 472.9,229.8 472.8,242.2 471.0,240.8" fill="#005600" stroke="#005600" stroke-width="0.6"/><polygon points="472.9,229.8 478.1,231.1 478.1,243.5 472.8,242.2" fill="#005800" stroke="#005800" stroke-width="0.6"/><polygon points="478.1,231.1 486.4,232.2 486.7,244.6 478.1,243.5" fill="#006500" stroke="#006500" stroke-width="0.6"/><polygon points="486.4,232.2 497.3,233.0 497.8,245.4 486.7,244.6" fill="#007900" stroke="#007900" stroke-width="0.6"/><polygon points="497.3,233.0 509.9,233.5 510.7,246.0 497.8,245.4" fill="#008e00" stroke="#008e00" stroke-width="0.6"/><polygon points="509.9,233.5 523.4,233.7 524.5,246.2 510.7,246.0" fill="#009f00" stroke="#009f00" stroke-width="0.6"/><polygon points="523.4,233.7 536.9,233.5 538.4,246.0 524.5,246.2" fill="#00ab00" stroke="#00ab00" stroke-width="0.6"/><polygon points="536.9,233.5 549.5,233.0 551.3,245.4 538.4,246.0" fill="#00ad00" stroke="#00ad00" stroke-width="0.6"/><polygon points="549.5,233.0 560.4,232.2 562.4,244.6 551.3,245.4" fill="#00a700" stroke="#00a700" stroke-width="0.6"/><polygon points="560.4,232.2 568.7,231.1 571.0,243.5 562.4,244.6" fill="#009900" stroke="#009900" stroke-width="0.6"/><polygon points="568.7,231.1 573.9,229.8 576.3,242.2 571.0,243.5" fill="#008600" stroke="#008600" stroke-width="0.6"/><polygon points="573.9,229.8 575.7,228.5 578.1,240.8 576.3,242.2" fill="#007100" stroke="#007100" stroke-width="0.6"/><polygon points="471.0,240.8 472.8,242.2 474.7,254.5 472.9,253.1" fill="#005600" stroke="#005600" stroke-width="0.6"/><polygon points="472.8,242.2 478.1,243.5 479.9,255.8 474.7,254.5" fill="#005600" stroke="#005600" stroke-width="0.6"/><polygon points="478.1,243.5 486.7,244.6 488.3,256.8 479.9,255.8" fill="#006000" stroke="#006000" stroke-width="0.6"/><polygon points="486.7,244.6 497.8,245.4 499.2,257.7 488.3,256.8" fill="#007100" stroke="#007100" stroke-width="0.6"/><polygon points="497.8,245.4 510.7,246.0 511.9,258.2 499.2,257.7" fill="#008400" stroke="#008400" stroke-width="0.6"/><polygon points="510.7,246.0 524.5,246.2 525.6,258.4 511.9,258.2" fill="#009500" stroke="#009500" stroke-width="0.6"/><polygon points="524.5,246.2 538.4,246.0 539.2,258.2 525.6,258.4" fill="#009f00" stroke="#009f00" stroke-width="0.6"/><polygon points="538.4,246.0 551.3,245.4 552.0,257.7 539.2,258.2" fill="#00a200" stroke="#00a200" stroke-width="0.6"/><polygon points="551.3,245.4 562.4,244.6 562.9,256.8 552.0,257.7" fill="#009c00" stroke="#009c00" stroke-width="0.6"/><polygon points="562.4,244.6 571.0,243.5 571.3,255.8 562.9,256.8" fill="#008f00" stroke="#008f00" stroke-width="0.6"/><polygon points="571.0,243.5 576.3,242.2 576.5,254.5 571.3,255.8" fill="#007d00" stroke="#007d00" stroke-width="0.6"/><polygon points="576.3,242.2 578.1,240.8 578.3,253.1 576.5,254.5" fill="#006a00" stroke="#006a00" stroke-width="0.6"/><polygon points="472.9,253.1 474.7,254.5 479.0,266.7 477.3,265.4" fill="#005600" stroke="#005600" stroke-width="0.6"/><polygon points="474.7,254.5 479.9,255.8 483.9,267.9 479.0,266.7" fill="#005600" stroke="#005600" stroke-width="0.6"/><polygon points="479.9,255.8 488.3,256.8 491.7,268.9 483.9,267.9" fill="#005900" stroke="#005900" stroke-width="0.6"/><polygon points="488.3,256.8 499.2,257.7 501.8,269.7 491.7,268.9" fill="#006600" stroke="#006600" stroke-width="0.6"/><polygon points="499.2,257.7 511.9,258.2 513.6,270.2 501.8,269.7" fill="#007600" stroke="#007600" stroke-width="0.6"/><polygon points="511.9,258.2 525.6,258.4 526.3,270.3 513.6,270.2" fill="#008400" stroke="#008400" stroke-width="0.6"/><polygon points="525.6,258.4 539.2,258.2 538.9,270.2 526.3,270.3" fill="#008d00" stroke="#008d00" stroke-width="0.6"/><polygon points="539.2,258.2 552.0,257.7 550.8,269.7 538.9,270.2" fill="#009000" stroke="#009000" stroke-width="0.6"/><polygon points="552.0,257.7 562.9,256.8 560.9,268.9 550.8,269.7" fill="#008b00" stroke="#008b00" stroke-width="0.6"/><polygon points="562.9,256.8 571.3,255.8 568.7,267.9 560.9,268.9" fill="#007f00" stroke="#007f00" stroke-width="0.6"/><polygon points="571.3,255.8 576.5,254.5 573.6,266.7 568.7,267.9" fill="#007000" stroke="#007000" stroke-width="0.6"/><polygon points="576.5,254.5 578.3,253.1 575.2,265.4 573.6,266.7" fill="#006100" stroke="#006100" stroke-width="0.6"/><polygon points="477.3,265.4 479.0,266.7 486.6,278.8 485.2,277.7" fill="#005600" stroke="#005600" stroke-width="0.6"/><polygon points="479.0,266.7 483.9,267.9 490.8,279.8 486.6,278.8" fill="#005600" stroke="#005600" stroke-width="0.6"/><polygon points="483.9,267.9 491.7,268.9 497.4,280.7 490.8,279.8" fill="#005600" stroke="#005600" stroke-width="0.6"/><polygon points="491.7,268.9 501.8,269.7 506.1,281.4 497.4,280.7" fill="#005d00" stroke="#005d00" stroke-width="0.6"/><polygon points="501.8,269.7 513.6,270.2 516.1,281.8 506.1,281.4" fill="#006700" stroke="#006700" stroke-width="0.6"/><polygon points="513.6,270.2 526.3,270.3 527.0,281.9 516.1,281.8" fill="#007200" stroke="#007200" stroke-width="0.6"/><polygon points="526.3,270.3 538.9,270.2 537.8,281.8 527.0,281.9" fill="#007900" stroke="#007900" stroke-width="0.6"/><polygon points="538.9,270.2 550.8,269.7 547.9,281.4 537.8,281.8" fill="#007b00" stroke="#007b00" stroke-width="0.6"/><polygon points="550.8,269.7 560.9,268.9 556.5,280.7 547.9,281.4" fill="#007700" stroke="#007700" stroke-width="0.6"/><polygon points="560.9,268.9 568.7,267.9 563.2,279.8 556.5,280.7" fill="#006e00" stroke="#006e00" stroke-width="0.6"/><polygon points="568.7,267.9 573.6,266.7 567.3,278.8 563.2,279.8" fill="#006300" stroke="#006300" stroke-width="0.6"/><polygon points="573.6,266.7 575.2,265.4 568.8,277.7 567.3,278.8" fill="#005900" stroke="#005900" stroke-width="0.6"/><polygon points="485.2,277.7 486.6,278.8 498.4,290.8 497.4,290.1" fill="#005600" stroke="#005600" stroke-width="0.6"/><polygon points="486.6,278.8 490.8,279.8 501.4,291.5 498.4,290.8" fill="#005600" stroke="#005600" stroke-width="0.6"/><polygon points="490.8,279.8 497.4,280.7 506.0,292.1 501.4,291.5" fill="#005600" stroke="#005600" stroke-width="0.6"/><polygon points="497.4,280.7 506.1,281.4 512.1,292.6 506.0,292.1" fill="#005600" stroke="#005600" stroke-width="0.6"/><polygon points="506.1,281.4 516.1,281.8 519.2,292.9 512.1,292.6" fill="#005a00" stroke="#005a00" stroke-width="0.6"/><polygon points="516.1,281.8 527.0,281.9 526.7,293.0 519.2,292.9" fill="#005f00" stroke="#005f00" stroke-width="0.6"/><polygon points="527.0,281.9 537.8,281.8 534.3,292.9 526.7,293.0" fill="#006300" stroke="#006300" stroke-width="0.6"/><polygon points="537.8,281.8 547.9,281.4 541.4,292.6 534.3,292.9" fill="#006400" stroke="#006400" stroke-width="0.6"/><polygon points="547.9,281.4 556.5,280.7 547.5,292.1 541.4,292.6" fill="#006200" stroke="#006200" stroke-width="0.6"/><polygon points="556.5,280.7 563.2,279.8 552.1,291.5 547.5,292.1" fill="#005d00" stroke="#005d00" stroke-width="0.6"/><polygon points="563.2,279.8 567.3,278.8 555.0,290.8 552.1,291.5" fill="#005800" stroke="#005800" stroke-width="0.6"/><polygon points="567.3,278.8 568.8,277.7 556.0,290.1 555.0,290.8" fill="#005600" stroke="#005600" stroke-width="0.6"/><polygon points="497.4,290.1 498.4,290.8 522.6,302.4 522.6,302.4" fill="#005600" stroke="#005600" stroke-width="0.6"/><polygon points="498.4,290.8 501.4,291.5 522.6,302.4 522.6,302.4" fill="#005600" stroke="#005600" stroke-width="0.6"/><polygon points="501.4,291.5 506.0,292.1 522.6,302.4 522.6,302.4" fill="#005600" stroke="#005600" stroke-width="0.6"/><polygon points="506.0,292.1 512.1,292.6 522.6,302.4 522.6,302.4" fill="#005600" stroke="#005600" stroke-width="0.6"/><polygon points="512.1,292.6 519.2,292.9 522.6,302.4 522.6,302.4" fill="#005600" stroke="#005600" stroke-width="0.6"/><polygon points="519.2,292.9 526.7,293.0 522.6,302.4 522.6,302.4" fill="#005600" stroke="#005600" stroke-width="0.6"/><polygon points="526.7,293.0 534.3,292.9 522.6,302.4 522.6,302.4" fill="#005600" stroke="#005600" stroke-width="0.6"/><polygon points="534.3,292.9 541.4,292.6 522.6,302.4 522.6,302.4" fill="#005600" stroke="#005600" stroke-width="0.6"/><polygon points="541.4,292.6 547.5,292.1 522.6,302.4 522.6,302.4" fill="#005600" stroke="#005600" stroke-width="0.6"/><polygon points="547.5,292.1 552.1,291.5 522.6,302.4 522.6,302.4" fill="#005600" stroke="#005600" stroke-width="0.6"/><polygon points="552.1,291.5 555.0,290.8 522.6,302.4 522.6,302.4" fill="#005600" stroke="#005600" stroke-width="0.6"/><polygon points="555.0,290.8 556.0,290.1 522.6,302.4 522.6,302.4" fill="#005600" stroke="#005600" stroke-width="0.6"/></g>
<circle cx="438.5" cy="324.5" r="5.2" fill="#fff"/><path d="M434.6 328.4 A5.5 5.5 0 0 1 442.4 320.6" fill="none" stroke="#808080" stroke-width="1.1"/><path d="M435.3 327.7 A4.5 4.5 0 0 1 441.7 321.3" fill="none" stroke="#404040" stroke-width="1.1"/><path d="M434.6 328.4 A5.5 5.5 0 0 0 442.4 320.6" fill="none" stroke="#e8e6e0" stroke-width="1"/><path d="M435.3 327.7 A4.5 4.5 0 0 0 441.7 321.3" fill="none" stroke="#D4D0C8" stroke-width="1"/>
<circle cx="537.5" cy="324.5" r="5.2" fill="#fff"/><path d="M533.6 328.4 A5.5 5.5 0 0 1 541.4 320.6" fill="none" stroke="#808080" stroke-width="1.1"/><path d="M534.3 327.7 A4.5 4.5 0 0 1 540.7 321.3" fill="none" stroke="#404040" stroke-width="1.1"/><path d="M533.6 328.4 A5.5 5.5 0 0 0 541.4 320.6" fill="none" stroke="#e8e6e0" stroke-width="1"/><path d="M534.3 327.7 A4.5 4.5 0 0 0 540.7 321.3" fill="none" stroke="#D4D0C8" stroke-width="1"/><circle cx="537.5" cy="324.5" r="2" fill="#000"/>
<path d="M741.3 206.1 L751.0 207.4 L760.6 209.7 L768.7 213.4 L774.4 218.2 L776.8 224.7 L778.7 231.9 L779.2 238.4 L777.6 245.6 L774.4 252.9 L767.9 256.9 L759.0 260.2 L749.4 261.8 L741.3 262.6 L731.6 261.0 L721.9 259.4 L714.7 256.9 L709.8 252.1 L706.6 245.6 L704.5 238.4 L705.0 230.3 L706.6 223.1 L709.8 216.6 L715.5 211.8 L723.5 208.5 L731.6 206.9Z" fill="none" stroke="#000" stroke-width="1"/>
<path d="M764 231.5 H774 M769 226.5 V236.5" stroke="#000" stroke-width="1"/>
<path d="M777.3 216.3 L779.5 215 L782.7 219 L792.1 209.8 L792.9 211 L782.7 222.6 Z" fill="#909090"/>
<path d="M776.5 215.5 L778.7 214.2 L781.9 218.2 L791.3 209 L792.1 210.2 L781.9 221.8 Z" fill="#00E000"/>
<polyline points="459.3,374.7 460.8,371.6 462.4,364.3 470.7,364.3 472.4,370.6 473.8,371.6 477.0,367.4 481.1,365.4 485.3,365.0 488.4,372.6 491.5,365.4 499.8,364.3 502.3,372.6 505.0,367.4 509.1,365.4 514.3,365.8 517.4,372.6 520.5,366.4 524.7,364.3 537.1,364.3 540.2,371.6 542.3,370.6 545.4,367.9 553.7,366.4 564.1,365.8 567.2,369.9 569.2,371.6 572.4,369.5 576.5,365.4 582.7,364.3 594.1,364.3 596.2,369.5 598.3,372.6 601.4,369.5 604.5,367.0 613.8,365.4 623.2,365.4 626.3,370.6 628.3,371.2 630.0,368.5 630.0,366.4 634.1,364.3 644.5,364.3 648.7,365.4 654.5,363.7 659.0,364.3 661.1,368.5 663.2,371.2 665.7,371.2 668.4,367.9 673.5,366.4 683.9,365.8 692.2,367.0 700.5,365.4 703.6,365.4 705.7,370.6 707.8,371.6 710.9,368.5 715.0,365.8 723.3,365.0 729.5,364.3 737.8,365.0 745.1,364.3 747.2,367.4 749.2,371.2 751.9,371.2 754.4,368.5 758.6,366.4 773.1,365.4 783.5,366.4 789.3,365.0 791.8,370.6 794.9,371.6 796.9,368.5 800.0,365.8 804.6,365.4" fill="none" stroke="#0000F0" stroke-width="1.2" stroke-linejoin="round"/>
<polyline points="459.3,418.2 462.4,386.1 465.6,370.6 468.2,367.4 470.7,390.3 472.8,403.7 474.5,403.7 478.0,382.0 481.5,372.6 484.2,388.2 487.7,404.4 489.4,404.4 493.5,384.0 497.3,374.1 499.8,392.3 501.8,404.4 503.9,403.7 508.1,383.0 511.2,374.7 513.2,390.3 516.4,404.8 518.4,403.1 522.6,384.0 527.8,370.6 532.3,364.3 535.0,379.9 537.1,394.4 540.2,404.4 544.4,401.0 547.5,397.5 551.6,384.0 556.8,373.7 561.4,368.5 563.6,382.0 566.1,398.5 569.2,404.8 574.4,399.6 577.5,394.4 582.7,380.9 586.9,373.7 590.4,369.5 592.7,384.0 595.2,399.6 597.6,404.8 604.5,398.5 607.6,389.2 613.8,377.8 618.4,369.5 621.1,386.1 623.2,398.5 625.9,404.8 630.0,401.7 630.0,401.0 634.1,395.4 638.3,384.0 644.5,372.6 650.7,365.4 654.5,363.3 656.5,377.8 659.0,392.3 661.1,401.7 664.2,404.8 671.5,399.6 677.7,393.4 680.8,384.0 686.0,374.7 692.2,369.1 697.4,366.4 699.5,379.9 702.6,396.5 704.7,403.1 707.1,404.8 715.0,399.6 721.2,393.4 724.4,386.1 731.6,375.7 736.8,369.5 740.3,365.8 743.0,382.0 745.7,396.5 748.2,402.3 750.7,404.8 758.6,399.6 764.8,393.4 767.9,386.1 771.0,380.9 777.2,374.7 783.5,367.4 785.9,379.9 788.6,396.5 790.7,402.3 793.8,404.8 800.0,399.6 804.6,395.4" fill="none" stroke="#008000" stroke-width="1.1" stroke-linejoin="round"/>
<path d="M458.5 364 V419 M458 418.5 H805" stroke="#000" stroke-width="1" fill="none"/>
<path d="M458.5 454 V508 M458 507.5 H805" stroke="#000" stroke-width="1" fill="none"/>
<path d="M459 506 H805" stroke="#1414E0" stroke-width="1.6" fill="none"/>
<polyline points="459.3,507.2 461.4,505.1 462.9,476.1 465.6,459.5 468.2,456.4 470.3,482.3 472.8,503.1 474.5,501.0 478.0,474.0 480.7,464.7 482.1,461.6 484.2,480.3 488.4,505.1 491.5,486.5 494.6,469.9 497.7,462.6 499.8,482.3 502.9,505.1 506.0,486.5 509.1,469.9 511.2,463.7 513.2,482.3 517.4,505.1 520.5,484.4 524.7,465.7 528.8,457.4 532.5,454.3 535.0,474.0 538.1,492.7 540.6,506.2 545.4,492.7 550.6,476.1 555.8,464.7 561.6,458.5 564.1,478.2 567.2,498.9 569.2,505.6 574.4,490.6 579.6,476.1 585.8,464.7 590.4,458.5 593.1,476.1 596.2,496.8 598.3,505.1 603.5,490.6 609.7,472.0 615.9,462.6 618.4,459.5 621.1,478.2 624.2,498.9 626.3,505.6 630.0,496.8 630.0,496.8 634.1,484.4 638.3,472.0 644.5,461.6 650.7,454.3 654.5,452.3 656.5,467.8 659.0,486.5 662.1,503.1 664.2,505.6 669.4,494.8 675.6,482.3 680.8,472.0 686.0,464.7 692.2,458.5 697.4,455.4 699.5,469.9 702.6,488.5 705.1,502.0 707.1,505.6 712.9,494.8 719.2,483.4 725.4,472.0 731.6,464.7 736.8,458.5 740.3,455.4 743.0,472.0 745.7,488.5 748.2,501.0 750.7,506.2 756.5,494.8 762.7,483.4 767.9,474.0 775.2,465.7 783.5,457.0 785.9,472.0 788.6,488.5 791.3,501.0 793.8,506.8 799.0,494.8 804.6,487.5" fill="none" stroke="#008000" stroke-width="1.1" stroke-linejoin="round"/>
<path d="M458.5 544 V598.5" stroke="#000" stroke-width="1" fill="none"/>
<polyline points="459.3,598.2 460.4,582.7 461.4,557.8 463.5,554.7 465.6,545.4 467.6,543.3 469.7,557.8 471.2,559.9 473.2,570.3 475.3,591.0 477.0,576.5 478.6,555.7 480.7,544.3 482.1,545.4 484.2,555.7 486.3,557.8 489.0,566.1 491.1,575.4 492.5,557.8 495.2,553.7 497.3,549.5 499.4,555.7 501.8,562.0 505.0,568.2 506.4,559.9 508.5,552.6 511.2,554.7 514.3,556.8 517.4,564.0 520.1,570.3 521.5,557.8 522.6,555.3 524.7,556.8 527.1,554.7 528.8,548.5 530.9,546.4 532.9,551.6 534.6,556.8 538.1,557.8 542.3,563.0 545.4,574.4 548.5,584.4 550.0,570.3 551.2,563.0 554.7,562.0 558.9,557.8 561.6,551.2 563.0,556.8 566.1,557.8 570.3,560.9 574.0,567.1 577.1,575.4 579.0,562.0 581.1,555.3 585.8,552.6 591.0,555.7 595.2,556.8 600.3,563.0 604.5,568.2 607.2,562.0 608.6,555.7 611.8,553.7 614.9,554.1 617.6,556.8 623.2,557.4 627.3,559.9 630.0,563.6 630.0,564.0 634.1,568.2 636.2,559.9 638.3,554.7 642.4,555.7 647.6,556.8 650.7,551.6 654.5,546.4 655.9,556.8 661.1,557.8 666.3,559.9 670.4,566.1 674.6,573.4 677.7,578.1 679.8,564.0 681.8,558.2 685.0,557.4 690.1,558.8 694.3,557.4 697.4,555.3 699.5,557.4 704.7,557.8 709.8,560.3 714.0,566.1 718.1,571.3 720.6,574.4 722.7,562.0 725.4,556.8 729.5,554.1 735.8,553.7 740.3,552.6 742.0,556.8 748.2,557.8 754.4,560.3 758.6,565.1 763.3,570.3 765.8,559.9 767.9,554.7 772.1,552.6 778.3,554.1 782.4,556.8 789.7,557.4 796.9,560.9 801.1,565.7 804.6,567.8" fill="none" stroke="#008000" stroke-width="1.1" stroke-linejoin="round"/>
</svg>
<div class="t ux" style="left:450px;top:319px;font-size:12px;">Wire Frame</div>
<div class="t ux" style="left:549px;top:319px;font-size:12px;">Solid</div>
<div class="t ux" style="left:645px;top:146px;font-size:12px;">N: 172.107</div>
</body></html>
